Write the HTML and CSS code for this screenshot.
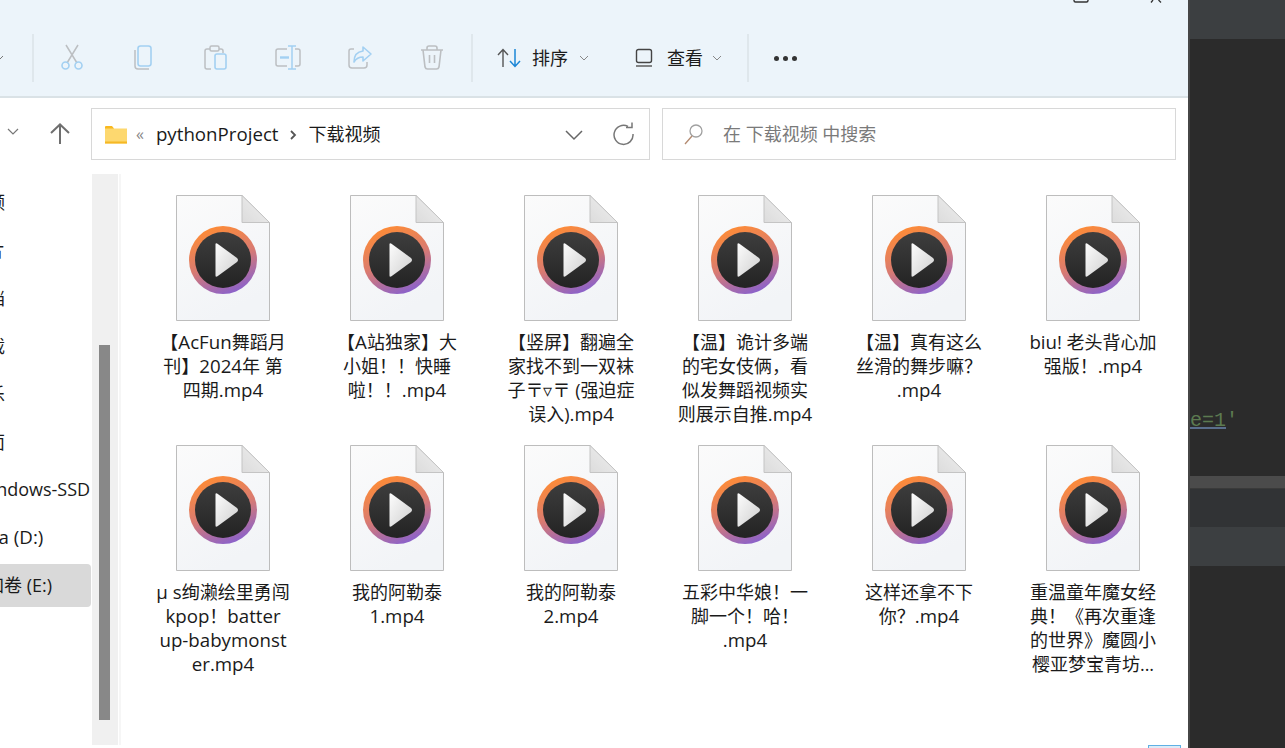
FILE: index.html
```html
<!DOCTYPE html>
<html lang="zh-CN">
<head>
<meta charset="utf-8">
<title>下载视频</title>
<link rel="stylesheet" href="styles.css">
</head>
<body>
<svg class="defs" width="0" height="0" aria-hidden="true">
  <defs>
    <linearGradient id="ring" x1="0.3" y1="0" x2="0.7" y2="1">
      <stop offset="0" stop-color="#ff8c34"/>
      <stop offset="0.5" stop-color="#da7b70"/>
      <stop offset="1" stop-color="#8660d0"/>
    </linearGradient>
    <linearGradient id="disc" x1="0" y1="0" x2="0" y2="1">
      <stop offset="0" stop-color="#3e3e3e"/>
      <stop offset="1" stop-color="#232323"/>
    </linearGradient>
    <linearGradient id="tri" x1="0" y1="0" x2="1" y2="1">
      <stop offset="0" stop-color="#fdfdfd"/>
      <stop offset="1" stop-color="#cfcfcf"/>
    </linearGradient>
    <linearGradient id="fold" x1="0" y1="1" x2="1" y2="0">
      <stop offset="0" stop-color="#dcdcdc"/>
      <stop offset="1" stop-color="#f0f0f0"/>
    </linearGradient>
    <linearGradient id="page" x1="0" y1="0" x2="0.4" y2="1">
      <stop offset="0" stop-color="#fbfbfb"/>
      <stop offset="1" stop-color="#f2f4f7"/>
    </linearGradient>
    <symbol id="video" viewBox="0 0 96 127">
      <path d="M1.500 0.500H67L94.500 27.500V125.500H1.500Z" fill="url(#page)" stroke="#bdbdbd" stroke-width="1"/>
      <path d="M67 0.500V27.500H94.500Z" fill="url(#fold)" stroke="#c4c4c4" stroke-width="1"/>
      <circle cx="48" cy="65" r="34" fill="url(#ring)"/>
      <circle cx="48" cy="65" r="28" fill="url(#disc)"/>
      <path d="M40.500 49.500 Q40.500 47.500 42.500 48.700 L62 63 Q64 65 62 67 L42.500 81.300 Q40.500 82.500 40.500 80.500Z" fill="url(#tri)"/>
    </symbol>
  </defs>
</svg>

<div class="screen">
  <div class="explorer">
    <header class="toolbar">
      <div class="winctl">
        <svg class="win-max" width="16" height="3" viewBox="0 0 16 3"><path d="M1 0V0.500Q1 2 2.500 2H13.500Q15 2 15 0.500V0" fill="none" stroke="#333" stroke-width="1.400"/></svg>
        <svg class="win-close" width="16" height="3" viewBox="0 0 16 3"><path d="M4 2.500L6 0M14 2.500L11.500 0" fill="none" stroke="#333" stroke-width="1.300"/></svg>
      </div>
      <div class="tools">
        <svg class="chev-cut" width="7" height="6" viewBox="0 0 7 6"><path d="M0 1L3 4L6 1" fill="none" stroke="#777" stroke-width="1"/></svg>
        <span class="sep"></span>
        <span class="tool"><svg width="28" height="28" viewBox="0 0 28 28"><path d="M8 1L19 19M20 1L9 19" fill="none" stroke="#bcbfc2" stroke-width="1.500"/><circle cx="7.500" cy="21.500" r="3.500" fill="none" stroke="#a3d0f2" stroke-width="1.600"/><circle cx="20.500" cy="21.500" r="3.500" fill="none" stroke="#a3d0f2" stroke-width="1.600"/></svg></span>
        <span class="tool"><svg width="28" height="28" viewBox="0 0 28 28"><path d="M5 6V22Q5 25 8 25H19" fill="none" stroke="#bcbfc2" stroke-width="1.500"/><rect x="8" y="2" width="13" height="20" rx="2.500" fill="none" stroke="#a3d0f2" stroke-width="1.600"/></svg></span>
        <span class="tool"><svg width="28" height="28" viewBox="0 0 28 28"><path d="M9 25H5Q3 25 3 23V7Q3 5 5 5H8M17 5H19Q21 5 21 7V9" fill="none" stroke="#bcbfc2" stroke-width="1.500"/><rect x="8" y="2" width="9" height="5" rx="1.500" fill="none" stroke="#bcbfc2" stroke-width="1.500"/><rect x="13" y="10" width="11" height="15" rx="2" fill="none" stroke="#a3d0f2" stroke-width="1.600"/></svg></span>
        <span class="tool"><svg width="28" height="28" viewBox="0 0 28 28"><path d="M13 5H4Q2 5 2 7V20Q2 22 4 22H13M21 5H24Q26 5 26 7V20Q26 22 24 22H21" fill="none" stroke="#bcbfc2" stroke-width="1.500"/><path d="M14 2H22M18 2V25M14 25H22" fill="none" stroke="#a3d0f2" stroke-width="1.500"/><path d="M6 13.500H15" stroke="#a3d0f2" stroke-width="2.400"/></svg></span>
        <span class="tool"><svg width="28" height="28" viewBox="0 0 28 28"><path d="M8 5H5Q3 5 3 7V21Q3 24 6 24H18Q21 24 21 21V18" fill="none" stroke="#bcbfc2" stroke-width="1.500"/><path d="M17 3L25 10L17 17V13Q11 13 8 18Q8 8 17 7Z" fill="none" stroke="#a3d0f2" stroke-width="1.600" stroke-linejoin="round"/></svg></span>
        <span class="tool"><svg width="28" height="28" viewBox="0 0 28 28"><path d="M3 6H25M9 6V4Q9 2 11 2H17Q19 2 19 4V6M5 6L7 23Q7.500 25 9.500 25H18.500Q20.500 25 21 23L23 6M11.500 11V19M16.500 11V19" fill="none" stroke="#bcbfc2" stroke-width="1.600"/></svg></span>
        <span class="sep sep-b"></span>
        <span class="cmd cmd-sort">
          <svg width="24" height="20" viewBox="0 0 24 20"><path d="M6 19V2M1 7L6 1.500L11 7" fill="none" stroke="#555" stroke-width="1.400"/><path d="M18 1V18M13 13L18 18.500L23 13" fill="none" stroke="#1b86d6" stroke-width="1.500"/></svg>
          <span class="cmd-text">排序</span>
          <svg class="cmd-chev" width="10" height="6" viewBox="0 0 10 6"><path d="M1 1L5 5L9 1" fill="none" stroke="#888" stroke-width="1"/></svg>
        </span>
        <span class="cmd cmd-view">
          <svg width="20" height="20" viewBox="0 0 20 20"><rect x="2.500" y="1.500" width="15" height="13" rx="2" fill="none" stroke="#444" stroke-width="1.400"/><path d="M2 18H18" stroke="#666" stroke-width="1.600"/></svg>
          <span class="cmd-text">查看</span>
          <svg class="cmd-chev" width="10" height="6" viewBox="0 0 10 6"><path d="M1 1L5 5L9 1" fill="none" stroke="#888" stroke-width="1"/></svg>
        </span>
        <span class="sep sep-c"></span>
        <span class="more"><i></i><i></i><i></i></span>
      </div>
    </header>

    <div class="addressrow">
      <svg class="nav-chev" width="12" height="8" viewBox="0 0 12 8"><path d="M1 1L6 6L11 1" fill="none" stroke="#777" stroke-width="1.200"/></svg>
      <svg class="nav-up" width="24" height="24" viewBox="0 0 24 24"><path d="M12 22V3M3 11L12 2.500L21 11" fill="none" stroke="#6f6f6f" stroke-width="2"/></svg>
      <div class="address">
        <svg class="folder" width="24" height="19" viewBox="0 0 24 19"><path d="M1 2Q1 1 2 1H8L10 3.500V5H1Z" fill="#f9b91f"/><rect x="1" y="3.500" width="22" height="15" fill="#fdd86f"/><rect x="1" y="16.500" width="22" height="2" fill="#f5b825"/></svg>
        <span class="crumb-more">«</span>
        <span class="crumb la">pythonProject</span>
        <svg class="crumb-sep" width="8" height="12" viewBox="0 0 8 12"><path d="M2 2L6 6L2 10" fill="none" stroke="#555" stroke-width="1.800"/></svg>
        <span class="crumb">下载视频</span>
        <svg class="addr-chev" width="20" height="12" viewBox="0 0 20 12"><path d="M2 2L10 10L18 2" fill="none" stroke="#666" stroke-width="1.500"/></svg>
        <svg class="addr-refresh" width="22" height="24" viewBox="0 0 22 24"><path d="M15 4.500A9.500 9.500 0 1 0 20 12" fill="none" stroke="#777" stroke-width="1.500"/><path d="M13 4.500H19V-0.500" transform="translate(0 1)" fill="none" stroke="#777" stroke-width="1.500"/></svg>
      </div>
      <div class="search">
        <svg width="22" height="22" viewBox="0 0 22 22"><circle cx="13" cy="8" r="6" fill="none" stroke="#a0a0a0" stroke-width="1.300"/><path d="M9 13L2 21" stroke="#b38a70" stroke-width="1.400"/></svg>
        <span class="search-text">在 下载视频 中搜索</span>
      </div>
    </div>

    <div class="main">
      <nav class="nav">
        <div class="nav-row nav-quick">视频</div>
        <div class="nav-row nav-quick">图片</div>
        <div class="nav-row nav-quick">文档</div>
        <div class="nav-row nav-quick">下载</div>
        <div class="nav-row nav-quick">音乐</div>
        <div class="nav-row nav-quick">桌面</div>
        <div class="nav-row nav-windows">Windows-SSD</div>
        <div class="nav-row nav-data">Data (D:)</div>
        <div class="nav-row nav-selected"><span class="nav-sel-bg">新加卷 (E:)</span></div>
        <div class="nav-row nav-net">网络</div>
      </nav>
      <div class="scrollbar"><div class="thumb"></div></div>
      <div class="divider"></div>
      <div class="files">
        <div class="file"><svg class="file-icon" width="96" height="127"><use href="#video"/></svg><p class="name">【<span class="la">AcFun</span>舞蹈月<br>刊】<span class="la">2024</span>年 第<br>四期<span class="la">.mp4</span></p></div>
        <div class="file"><svg class="file-icon" width="96" height="127"><use href="#video"/></svg><p class="name">【<span class="la">A</span>站独家】大<br>小姐！！快睡<br>啦！！<span class="la">.mp4</span></p></div>
        <div class="file"><svg class="file-icon" width="96" height="127"><use href="#video"/></svg><p class="name">【竖屏】翻遍全<br>家找不到一双袜<br>子〒▿〒 (强迫症<br>误入)<span class="la">.mp4</span></p></div>
        <div class="file"><svg class="file-icon" width="96" height="127"><use href="#video"/></svg><p class="name">【温】诡计多端<br>的宅女伎俩，看<br>似发舞蹈视频实<br>则展示自推<span class="la">.mp4</span></p></div>
        <div class="file"><svg class="file-icon" width="96" height="127"><use href="#video"/></svg><p class="name">【温】真有这么<br>丝滑的舞步嘛？<br><span class="la">.mp4</span></p></div>
        <div class="file"><svg class="file-icon" width="96" height="127"><use href="#video"/></svg><p class="name"><span class="la">biu!</span> 老头背心加<br>强版！<span class="la">.mp4</span></p></div>
        <div class="file"><svg class="file-icon" width="96" height="127"><use href="#video"/></svg><p class="name"><span class="la">μ s</span>绚濑绘里勇闯<br><span class="la">kpop</span>！<span class="la">batter</span><br><span class="la">up-babymonst</span><br><span class="la">er.mp4</span></p></div>
        <div class="file"><svg class="file-icon" width="96" height="127"><use href="#video"/></svg><p class="name">我的阿勒泰<br><span class="la">1.mp4</span></p></div>
        <div class="file"><svg class="file-icon" width="96" height="127"><use href="#video"/></svg><p class="name">我的阿勒泰<br><span class="la">2.mp4</span></p></div>
        <div class="file"><svg class="file-icon" width="96" height="127"><use href="#video"/></svg><p class="name">五彩中华娘！一<br>脚一个！哈！<br><span class="la">.mp4</span></p></div>
        <div class="file"><svg class="file-icon" width="96" height="127"><use href="#video"/></svg><p class="name">这样还拿不下<br>你？<span class="la">.mp4</span></p></div>
        <div class="file"><svg class="file-icon" width="96" height="127"><use href="#video"/></svg><p class="name">重温童年魔女经<br>典！《再次重逢<br>的世界》魔圆小<br>樱亚梦宝青坊...</p></div>
      </div>
    </div>
    <div class="statusbar"><span class="view-toggle"></span></div>
  </div>

  <aside class="ide">
    <div class="ide-top"></div>
    <div class="ide-code"><span class="code-link">e=1</span><span class="code-str">'</span></div>
    <div class="ide-band"></div>
    <div class="ide-row"></div>
    <div class="ide-sel"></div>
    <div class="ide-rest"></div>
  </aside>
</div>
</body>
</html>
```

FILE: styles.css
```css
html, body {
  margin: 0;
  padding: 0;
  height: 100%;
  overflow: hidden;
  background: #2b2b2b;
}

.defs {
  display: block;
  height: 0;
}

.screen {
  display: flex;
  width: 1285px;
  height: 748px;
  overflow: hidden;
  font-family: "Open Sans", "Noto Sans CJK SC", sans-serif;
  font-size: 18px;
  color: #1a1a1a;
}

/* Latin runs sit slightly larger than the CJK text around them */
.la {
  font-size: 18.7px;
}

.explorer {
  flex: 0 0 1188px;
  display: flex;
  flex-direction: column;
  background: #fff;
  overflow: hidden;
}

/* toolbar */
.toolbar {
  height: 96px;
  flex: none;
  background: #ecf4fa;
  border-bottom: 2px solid #dae2e6;
}

.winctl {
  height: 3px;
  display: flex;
  justify-content: flex-end;
  overflow: hidden;
}

.win-max {
  margin-right: 58px;
}

.win-close {
  margin-right: 25px;
}

.tools {
  margin-top: 31px;
  height: 48px;
  display: flex;
  align-items: center;
}

.chev-cut {
  margin-left: -3px;
  margin-right: 28px;
}

.sep {
  flex: none;
  width: 2px;
  height: 48px;
  background: #dfe7ec;
}

.tool {
  flex: none;
  width: 72px;
  display: flex;
  justify-content: center;
}

.sep + .tool {
  margin-left: 2px;
}

.sep-b {
  margin-left: 3px;
}

.cmd {
  display: flex;
  align-items: center;
  flex: none;
}

.cmd-sort {
  margin-left: 24px;
}

.cmd-view {
  margin-left: 45px;
}

.cmd-text {
  margin-left: 11px;
  line-height: 24px;
  color: #1c1c1c;
}

.cmd-view .cmd-text {
  margin-left: 13px;
}

.cmd-chev {
  margin-left: 11px;
}

.cmd-view .cmd-chev {
  margin-left: 9px;
}

.sep-c {
  margin-left: 25px;
}

.more {
  display: flex;
  gap: 4px;
  margin-left: 25px;
}

.more i {
  width: 5px;
  height: 5px;
  border-radius: 50%;
  background: #333;
}

/* address row */
.addressrow {
  height: 76px;
  flex: none;
  padding-top: 10px;
  box-sizing: border-box;
  display: flex;
  align-items: flex-start;
  position: relative;
}

.nav-chev {
  margin: 20px 0 0 7px;
}

.nav-up {
  margin: 14px 0 0 29px;
}

.address,
.search {
  box-sizing: border-box;
  height: 52px;
  border: 1px solid #d8d8d8;
  display: flex;
  align-items: center;
  flex: none;
}

.address {
  width: 559px;
  margin-left: 19px;
  padding-left: 12px;
}

.crumb-more {
  margin-left: 8px;
  color: #888;
  font-size: 16px;
}

.crumb {
  line-height: 24px;
  color: #1a1a1a;
}

.crumb-more + .crumb {
  margin-left: 12px;
}

.crumb-sep {
  margin: 1px 12px 0 10px;
}

.addr-chev {
  margin-left: auto;
  margin-top: 1px;
}

.addr-refresh {
  margin: 0 14px 0 29px;
}

.search {
  width: 514px;
  margin-left: 12px;
  padding-left: 20px;
}

.search-text {
  margin-left: 18px;
  color: #7a7a7a;
  line-height: 24px;
}

/* main area */
.main {
  height: 571px;
  flex: none;
  display: flex;
}

.nav {
  flex: 0 0 92px;
  overflow: hidden;
  padding-top: 3px;
  box-sizing: border-box;
}

.nav-row {
  height: 48px;
  line-height: 48px;
  white-space: nowrap;
}

.nav-quick {
  margin-left: -31px;
  line-height: 50px;
}

.nav-windows {
  margin-left: -25px;
}

.nav-data {
  margin-left: -32px;
  font-size: 18.7px;
}

.nav-selected {
  display: flex;
  align-items: center;
}

.nav-sel-bg {
  flex: 1;
  height: 43px;
  line-height: 43px;
  padding-left: 0;
  margin-left: -32px;
  margin-right: 1px;
  background: #d9d9d9;
  border-radius: 4px;
}

.nav-net {
  margin-top: 72px;
  margin-left: -36px;
}

.scrollbar {
  flex: 0 0 26px;
  background: #f0f0f0;
  padding-top: 171px;
  padding-left: 7px;
  box-sizing: border-box;
}

.thumb {
  width: 11px;
  height: 375px;
  background: #888;
}

.divider {
  flex: 0 0 2px;
  margin-left: 1px;
  background: #f6f6f6;
}

.files {
  flex: 1;
  margin-left: 15px;
  padding-top: 21px;
  display: grid;
  grid-template-columns: repeat(6, 174px);
  grid-auto-rows: 250px;
  align-content: start;
}

.file {
  display: flex;
  flex-direction: column;
  align-items: center;
}

.file-icon {
  flex: none;
}

.name {
  margin: 8px 0 0;
  width: 170px;
  line-height: 24px;
  text-align: center;
  color: #1a1a1a;
}

.statusbar {
  flex: 1;
  display: flex;
  justify-content: flex-end;
  overflow: hidden;
}

.view-toggle {
  box-sizing: border-box;
  width: 33px;
  height: 12px;
  margin-right: 7px;
  border: 1px solid #5fb0e4;
  background: #dcebf7;
}

/* IDE strip */
.ide {
  flex: 1;
  display: flex;
  flex-direction: column;
  border-left: 2px solid #464646;
  background: #2b2b2b;
}

.ide-top {
  height: 39px;
  flex: none;
  background: #3c3f41;
}

.ide-code {
  height: 437px;
  flex: none;
  box-sizing: border-box;
  padding-top: 370px;
  font-family: "Liberation Mono", monospace;
  font-size: 20px;
  line-height: 23px;
  white-space: nowrap;
  overflow: hidden;
}

.code-link {
  color: #5c7a50;
  text-decoration: underline;
  text-decoration-color: #5a6e8c;
}

.code-str {
  color: #5c7a50;
}

.ide-band {
  height: 12px;
  flex: none;
  background: #4b4b4b;
  border-bottom: 1px solid #3a3a3a;
}

.ide-row {
  height: 38px;
  flex: none;
  background: #313335;
}

.ide-sel {
  height: 39px;
  flex: none;
  background: #3c3f41;
}

.ide-rest {
  flex: 1;
  background: #2b2b2b;
}
```
